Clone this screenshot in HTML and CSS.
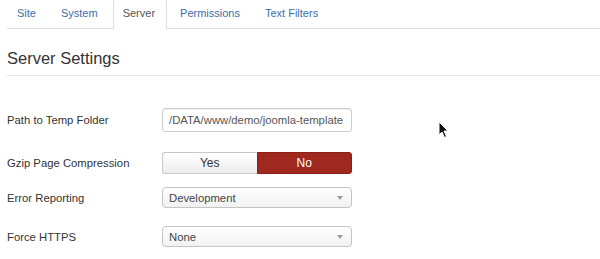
FILE: index.html
```html
<!DOCTYPE html>
<html lang="en">
<head>
    <meta charset="UTF-8">
    <title>Global Configuration - Server</title>
    <link rel="stylesheet" href="styles.css">
</head>
<body>
    <div class="page">
        <ul class="tabs">
            <li><a>Site</a></li>
            <li><a>System</a></li>
            <li class="active"><a>Server</a></li>
            <li><a>Permissions</a></li>
            <li><a>Text Filters</a></li>
        </ul>

        <h2 class="legend">Server Settings</h2>

        <div class="group g-path">
            <label>Path to Temp Folder</label>
            <div class="input">/DATA/www/demo/joomla-template</div>
        </div>
        <div class="group g-gzip">
            <label>Gzip Page Compression</label>
            <div class="toggle">
                <span class="yes">Yes</span>
                <span class="no">No</span>
            </div>
        </div>
        <div class="group g-error">
            <label>Error Reporting</label>
            <div class="select"><span>Development</span><i class="caret"></i></div>
        </div>
        <div class="group g-https">
            <label>Force HTTPS</label>
            <div class="select"><span>None</span><i class="caret"></i></div>
        </div>

        <svg class="cursor" width="12" height="18" viewBox="0 0 12 18">
            <path d="M1 1 L1 14 L4 11 L6.5 16.5 L8.5 15.5 L6 10 L10 10 Z" fill="#111" stroke="#fff" stroke-width="1"/>
        </svg>
    </div>
</body>
</html>
```

FILE: styles.css
```css
body {
    margin: 0;
    background: #fff;
    font-family: "Liberation Sans", Arial, sans-serif;
    color: #333;
}
.page {
    position: relative;
    padding-left: 7px;
    height: 259px;
    overflow: hidden;
}
.tabs {
    display: flex;
    list-style: none;
    margin: 0;
    padding: 0;
    border-bottom: 1px solid #ddd;
    height: 28px;
}
.tabs li {
    margin-bottom: -1px;
    margin-right: 3px;
}
.tabs a {
    display: block;
    height: 28px;
    line-height: 26px;
    padding: 0 11px 0 9px;
    border: 1px solid transparent;
    border-top: none;
    font-size: 11px;
    color: #3b6ea8;
}
.tabs .active a {
    color: #555;
    background: #fff;
    border-color: #ddd;
    border-bottom-color: #fff;
}
.legend {
    margin: 19px 0 0;
    padding-bottom: 6px;
    border-bottom: 1px solid #e5e5e5;
    font-size: 16.5px;
    font-weight: normal;
    line-height: 21px;
    color: #333;
}
.group {
    display: flex;
    align-items: center;
}
.group label {
    width: 155px;
    font-size: 11.3px;
}
.g-path { margin-top: 32px; }
.g-gzip { margin-top: 20px; }
.g-error { margin-top: 13px; }
.g-https { margin-top: 18px; }

.input {
    box-sizing: border-box;
    width: 190px;
    height: 24px;
    line-height: 22px;
    padding: 0 4px 0 6px;
    border: 1px solid #ccc;
    border-radius: 3px;
    font-size: 11.3px;
    color: #555;
    white-space: nowrap;
    overflow: hidden;
    box-shadow: inset 0 1px 1px rgba(0, 0, 0, 0.06);
}
.toggle {
    display: flex;
    width: 190px;
    height: 22px;
    font-size: 12px;
}
.toggle span {
    flex: 1;
    box-sizing: border-box;
    text-align: center;
    line-height: 20px;
}
.toggle .yes {
    border: 1px solid #c8c8c8;
    border-right: none;
    border-radius: 3px 0 0 3px;
    background: linear-gradient(#ffffff, #ececec);
    color: #333;
}
.toggle .no {
    border: 1px solid #8a1f18;
    border-radius: 0 3px 3px 0;
    background: #a0291f;
    color: #fff;
}
.select {
    box-sizing: border-box;
    display: flex;
    align-items: center;
    justify-content: space-between;
    width: 190px;
    height: 21px;
    padding: 0 8px 0 6px;
    border: 1px solid #c4c4c4;
    border-radius: 4px;
    background: linear-gradient(#ffffff, #f1f1f1);
    font-size: 11.3px;
    color: #444;
}
.caret {
    width: 0;
    height: 0;
    border-left: 3px solid transparent;
    border-right: 3px solid transparent;
    border-top: 4px solid #999;
}
.cursor {
    position: absolute;
    left: 438px;
    top: 121px;
}
```
